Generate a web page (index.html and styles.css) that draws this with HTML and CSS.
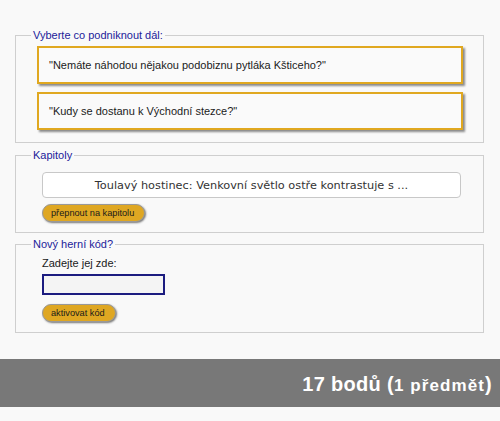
FILE: index.html
```html
<!DOCTYPE html>
<html lang="cs">
<head>
<meta charset="utf-8">
<link rel="stylesheet" href="styles.css">
</head>
<body>
<div class="main">
  <fieldset class="box box-choices">
    <legend>Vyberte co podniknout dál:</legend>
    <div class="choice">"Nemáte náhodou nějakou podobiznu pytláka Kšticeho?"</div>
    <div class="choice">"Kudy se dostanu k Východní stezce?"</div>
  </fieldset>
  <fieldset class="box box-chapters">
    <legend>Kapitoly</legend>
    <div class="select">Toulavý hostinec: Venkovní světlo ostře kontrastuje s ...</div>
    <button class="btn">přepnout na kapitolu</button>
  </fieldset>
  <fieldset class="box box-code">
    <legend>Nový herní kód?</legend>
    <div class="label">Zadejte jej zde:</div>
    <div class="input"></div>
    <button class="btn">aktivovat kód</button>
  </fieldset>
</div>
<div class="footer">
  <span class="score">17 bodů (<span class="small">1 předmět</span>)</span>
</div>
</body>
</html>
```
FILE: styles.css
```css
html, body {
  margin: 0;
  padding: 0;
  background: #f9f9f9;
  font-family: "Liberation Sans", Arial, sans-serif;
  color: #222;
}
.main {
  padding: 28px 16px 0 15px;
}
.box {
  margin: 0;
  border: 1px solid #cfcfcf;
  min-width: 0;
}
.box legend {
  font-size: 11px;
  line-height: 14px;
  color: #22229a;
  padding: 0 2px;
}
.box-choices {
  padding: 4px 20px 12px 21px;
  margin-bottom: 5px;
}
.box-choices legend {
  margin-left: -6px;
}
.choice {
  height: 34px;
  border: 2px solid #e0a820;
  box-shadow: 2px 2px 2px #8a8a8a;
  background: #fafafa;
  display: flex;
  align-items: center;
  padding: 0 10px;
  font-size: 11px;
  color: #1a1a1a;
}
.choice + .choice {
  margin-top: 8px;
}
.box-chapters {
  padding: 10px 22px 10px 26px;
  margin-bottom: 4px;
}
.box-chapters legend,
.box-code legend {
  margin-left: -11px;
}
.select {
  height: 24px;
  border: 1px solid #c8c8c8;
  border-radius: 4px;
  background: #fff;
  font-family: "DejaVu Sans", Verdana, sans-serif;
  font-size: 11.3px;
  color: #333;
  display: flex;
  align-items: center;
  justify-content: center;
}
.btn {
  display: block;
  margin-top: 6px;
  height: 18px;
  padding: 0 10px 0 8px;
  border: 1px solid #999;
  border-radius: 9px;
  background: #dfa722;
  box-shadow: 1px 1px 2px #777;
  font-family: "Liberation Sans", Arial, sans-serif;
  font-size: 9.2px;
  color: #1a1a1a;
  line-height: 16px;
}
.box-code {
  padding: 5px 22px 10px 26px;
}
.label {
  font-size: 11px;
  line-height: 14px;
  color: #1a1a1a;
}
.input {
  width: 119px;
  height: 17px;
  border: 2px solid #1c1c80;
  background: #f4f4f4;
  margin-top: 4px;
}
.box-code .btn {
  margin-top: 9px;
}
.footer {
  margin-top: 26px;
  height: 48px;
  background: #787878;
  color: #fff;
  font-weight: bold;
  display: flex;
  align-items: center;
  justify-content: flex-end;
  padding-right: 8px;
  padding-top: 3px;
  box-sizing: border-box;
}
.score {
  font-size: 20px;
  letter-spacing: 0.3px;
}
.small {
  font-size: 17px;
  letter-spacing: 1.1px;
}
```
